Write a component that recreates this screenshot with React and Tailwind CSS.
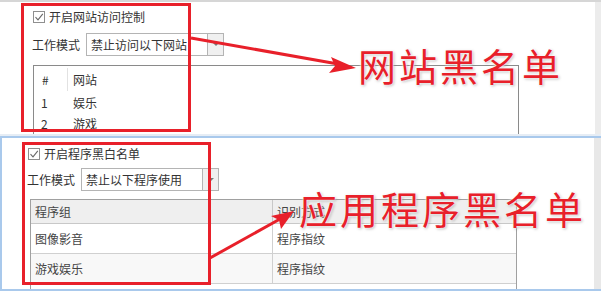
import React from "react";

const ui = { fontFamily: '"Noto Sans CJK SC", "Noto Sans", sans-serif' };

function Check() {
  return (
    <span className="inline-flex w-[12px] h-[12px] border border-[#8f8f8f] bg-white items-center justify-center">
      <svg width="10" height="10" viewBox="0 0 10 10">
        <path d="M1.5 5.2 L4 7.8 L8.8 1.8" fill="none" stroke="#6a6a6a" strokeWidth="1.1" />
      </svg>
    </span>
  );
}

function Combo({ text }) {
  return (
    <div className="flex h-[23px] w-[138px] border border-[#b4b4b4] bg-white">
      <div className="flex-1 flex items-center pl-[4px] text-[12px] text-[#333]">{text}</div>
      <div className="w-[16px] border-l border-[#b4b4b4] bg-[#f0f0f0] flex items-center justify-center">
        <svg width="6" height="4" viewBox="0 0 6 4"><path d="M0 0 L6 0 L3 3 Z" fill="#777" /></svg>
      </div>
    </div>
  );
}

export default function App() {
  return (
    <div className="relative w-[601px] h-[293px] overflow-hidden bg-white text-[#333]" style={ui}>
      {/* top panel */}
      <div className="flex h-[134px] border-t-2 border-[#d6d6d6]">
        <div className="flex-1 flex flex-col pl-[33px]">
          <div className="flex items-center gap-[4px] mt-[8px] h-[13px] text-[12px]">
            <Check />
            <span>开启网站访问控制</span>
          </div>
          <div className="flex items-center mt-[10px] -ml-[1px]">
            <span className="text-[12px] w-[54px]">工作模式</span>
            <Combo text="禁止访问以下网站" />
          </div>
          <div className="mt-[9px] w-[486px] flex-1 border-t border-l border-r border-[#8a8a8a] text-[12px]">
            <div className="flex h-[25px] items-center mt-[1px]">
              <span className="w-[33px] pl-[8px]">#</span>
              <span className="h-[23px] border-l border-[#e2e2e2] pl-[5px] flex items-center">网站</span>
            </div>
            <div className="flex h-[21px] items-center mt-[0px]">
              <span className="w-[39px] pl-[7px]">1</span>
              <span>娱乐</span>
            </div>
            <div className="flex h-[21px] items-center">
              <span className="w-[39px] pl-[7px]">2</span>
              <span>游戏</span>
            </div>
          </div>
        </div>
        <div className="w-[6px] bg-[#ececec]" />
      </div>
      {/* separator */}
      <div className="h-[2px] bg-[#e6edf5]" />
      {/* bottom panel */}
      <div className="flex h-[155px] border-t-2 border-l-2 border-b-2 border-[#a9c9ec] bg-white">
        <div className="flex-1 flex flex-col pl-[26px]">
          <div className="flex items-center gap-[4px] mt-[9px] h-[13px] text-[12px]">
            <Check />
            <span>开启程序黑白名单</span>
          </div>
          <div className="flex items-center mt-[8px] -ml-[1px]">
            <span className="text-[12px] w-[54px]">工作模式</span>
            <Combo text="禁止以下程序使用" />
          </div>
          <div className="mt-[8px] ml-[2px] w-[487px] flex-1 border-t border-l border-r border-[#a0a0a0] text-[12px] text-[#444]">
            <div className="flex h-[24px] bg-[#efefef] border-b border-[#c8c8c8]">
              <div className="w-[242px] flex items-center pl-[4px] border-r border-[#c8c8c8]">程序组</div>
              <div className="flex-1 flex items-center pl-[4px]">识别方式</div>
            </div>
            <div className="flex h-[30px] bg-white border-b border-[#d0d0d0]">
              <div className="w-[242px] flex items-center pl-[4px] border-r border-[#d0d0d0]">图像影音</div>
              <div className="flex-1 flex items-center pl-[4px]">程序指纹</div>
            </div>
            <div className="flex h-[30px] bg-[#f8f8f8] border-b border-[#d0d0d0]">
              <div className="w-[242px] flex items-center pl-[4px] border-r border-[#d0d0d0]">游戏娱乐</div>
              <div className="flex-1 flex items-center pl-[4px]">程序指纹</div>
            </div>
          </div>
        </div>
        <div className="w-[7px] bg-[#e8e8e8]" />
      </div>

      {/* annotations */}
      <div className="absolute left-[21px] top-[3px] w-[170px] h-[129px] border-[3px] border-[#e8202a]" />
      <div className="absolute left-[22px] top-[142px] w-[189px] h-[143px] border-[3px] border-[#e8202a]" />
      <svg className="absolute left-0 top-0" width="601" height="293" viewBox="0 0 601 293">
        <line x1="191" y1="38" x2="338" y2="64" stroke="#e8202a" strokeWidth="3" />
        <polygon points="356,68 331,57 335,66 329,73" fill="#e8202a" />
        <line x1="210" y1="258" x2="280" y2="219" stroke="#e8202a" strokeWidth="3" />
        <polygon points="294,211 271,216 279,220 281,229" fill="#e8202a" />
      </svg>
      <div className="absolute left-[358px] top-[40px] text-[38px] leading-[50px] tracking-[3px] text-[#e8202a] [text-shadow:0_0_2px_#fff,0_0_3px_#fff,1px_1px_3px_rgba(0,0,0,0.35)]" style={ui}>
        网站黑名单
      </div>
      <div className="absolute left-[299px] top-[183px] text-[38px] leading-[50px] tracking-[3px] text-[#e8202a] [text-shadow:0_0_2px_#fff,0_0_3px_#fff,1px_1px_3px_rgba(0,0,0,0.35)]" style={ui}>
        应用程序黑名单
      </div>
    </div>
  );
}
